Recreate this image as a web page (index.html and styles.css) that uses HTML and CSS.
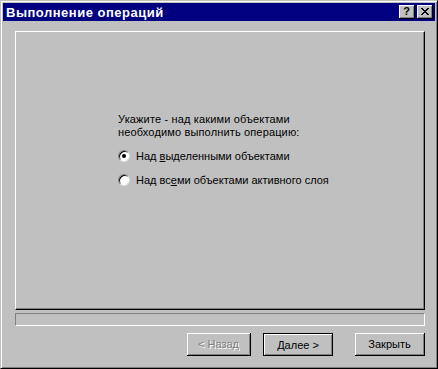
FILE: index.html
```html
<!DOCTYPE html>
<html>
<head>
<meta charset="utf-8">
<link rel="stylesheet" href="styles.css">
</head>
<body>
<div class="window">
  <div class="titlebar">
    <span class="title">Выполнение операций</span>
    <div class="tbtns">
      <span class="tbtn">?</span>
      <span class="tbtn close"><svg width="8" height="7" viewBox="0 0 8 7"><path d="M0 0h2v1h1v1h2V1h1V0h2v1H7v1H6v1H5v1h1v1h1v1h1v1H6V6H5V5H3v1H2v1H0V6h1V5h1V4h1V3H2V2H1V1H0z" fill="#000"/></svg></span>
    </div>
  </div>
  <div class="client">
    <div class="panel">
      <div class="content">
        <p class="prompt">Укажите - над какими объектами<br>необходимо выполнить операцию:</p>
        <label class="radio-row"><span class="radio checked"><span class="dot"></span></span><span>Над <u>в</u>ыделенными объектами</span></label>
        <label class="radio-row"><span class="radio"></span><span>Над вс<u>е</u>ми объектами активного слоя</span></label>
      </div>
    </div>
    <div class="progress"></div>
    <div class="buttons">
      <button class="btn disabled">&lt; Назад</button>
      <button class="btn default">Далее &gt;</button>
      <button class="btn close-btn">Закрыть</button>
    </div>
  </div>
</div>
</body>
</html>
```
FILE: styles.css
```css
html, body {
  margin: 0;
  padding: 0;
  background: #c0c0c0;
}
body {
  font-family: "Liberation Sans", Arial, sans-serif;
  font-size: 11px;
  color: #000;
}
.window {
  width: 438px;
  height: 369px;
  box-sizing: border-box;
  background: #c0c0c0;
  border-top: 1px solid #c0c0c0;
  border-left: 1px solid #c0c0c0;
  border-right: 1px solid #000;
  border-bottom: 1px solid #000;
  box-shadow: inset 1px 1px 0 #fff, inset -1px -1px 0 #808080;
  padding: 2px;
  display: flex;
  flex-direction: column;
}
.titlebar {
  height: 18px;
  background: #000080;
  display: flex;
  align-items: center;
  justify-content: space-between;
  padding: 0 2px 0 3px;
}
.title {
  color: #fff;
  font-weight: bold;
  font-size: 13px;
  letter-spacing: 0.5px;
}
.tbtns {
  display: flex;
  gap: 2px;
}
.tbtn {
  width: 16px;
  height: 14px;
  box-sizing: border-box;
  background: #c0c0c0;
  border-right: 1px solid #000;
  border-bottom: 1px solid #000;
  box-shadow: inset 1px 1px 0 #fff, inset -1px -1px 0 #808080;
  display: flex;
  align-items: center;
  justify-content: center;
  font-weight: bold;
  font-size: 11px;
  line-height: 1;
}
.client {
  flex: 1;
  display: flex;
  flex-direction: column;
  padding: 10px 10px 0 12px;
}
.panel {
  height: 279px;
  box-sizing: border-box;
  border-top: 1px solid #fff;
  border-left: 1px solid #fff;
  border-right: 1px solid #000;
  border-bottom: 1px solid #000;
  box-shadow: inset -1px -1px 0 #808080;
}
.content {
  padding: 81px 0 0 102px;
}
.prompt {
  margin: 0 0 9px 0;
  line-height: 13px;
  letter-spacing: 0.15px;
}
.radio-row {
  display: flex;
  align-items: center;
  gap: 6px;
  height: 16px;
  margin-bottom: 8px;
}
.radio {
  width: 12px;
  height: 12px;
  box-sizing: border-box;
  border-radius: 50%;
  background: #fff;
  border: 1px solid;
  border-color: #808080 #dfdfdf #dfdfdf #808080;
  box-shadow: inset 1px 1px 0 #000;
  display: flex;
  align-items: center;
  justify-content: center;
}
.dot {
  width: 4px;
  height: 4px;
  border-radius: 50%;
  background: #000;
}
.progress {
  margin-top: 3px;
  height: 13px;
  box-sizing: border-box;
  border-top: 1px solid #808080;
  border-left: 1px solid #808080;
  border-right: 1px solid #fff;
  border-bottom: 1px solid #fff;
}
.buttons {
  display: flex;
  justify-content: flex-end;
  margin-top: 7px;
}
.btn {
  height: 23px;
  width: 70px;
  box-sizing: border-box;
  background: #c0c0c0;
  font-family: "Liberation Sans", Arial, sans-serif;
  font-size: 11px;
  color: #000;
  border: none;
  border-right: 1px solid #000;
  border-bottom: 1px solid #000;
  box-shadow: inset 1px 1px 0 #fff, inset -1px -1px 0 #808080;
  padding: 0;
}
.btn.disabled {
  width: 64px;
  color: #808080;
  text-shadow: 1px 1px 0 #fff;
}
.btn.default {
  margin-left: 12px;
  border: 1px solid #000;
  box-shadow: inset 1px 1px 0 #fff, inset -1px -1px 0 #808080;
}
.btn.close-btn {
  margin-left: 22px;
}
```
